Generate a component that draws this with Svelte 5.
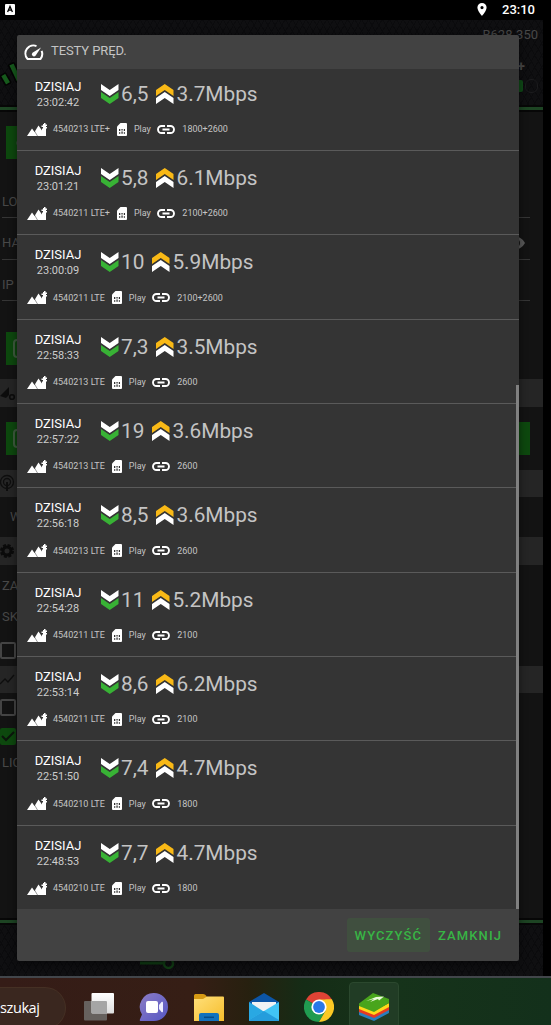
<script lang="ts">
	type Test = {
		time: string;
		down: string;
		up: string;
		cell: string;
		bands: string;
	};

	const tests: Test[] = [
		{ time: '23:02:42', down: '6,5', up: '3.7', cell: '4540213 LTE+', bands: '1800+2600' },
		{ time: '23:01:21', down: '5,8', up: '6.1', cell: '4540211 LTE+', bands: '2100+2600' },
		{ time: '23:00:09', down: '10', up: '5.9', cell: '4540211 LTE', bands: '2100+2600' },
		{ time: '22:58:33', down: '7,3', up: '3.5', cell: '4540213 LTE', bands: '2600' },
		{ time: '22:57:22', down: '19', up: '3.6', cell: '4540213 LTE', bands: '2600' },
		{ time: '22:56:18', down: '8,5', up: '3.6', cell: '4540213 LTE', bands: '2600' },
		{ time: '22:54:28', down: '11', up: '5.2', cell: '4540211 LTE', bands: '2100' },
		{ time: '22:53:14', down: '8,6', up: '6.2', cell: '4540211 LTE', bands: '2100' },
		{ time: '22:51:50', down: '7,4', up: '4.7', cell: '4540210 LTE', bands: '1800' },
		{ time: '22:48:53', down: '7,7', up: '4.7', cell: '4540210 LTE', bands: '1800' }
	];
</script>

<div class="screen">
	<header class="status">
		<svg class="keyboard" width="10" height="11" viewBox="0 0 10 11">
			<rect width="10" height="11" rx="1" fill="#fff" />
			<path d="M2.6 8 5 2.5 7.4 8M3.5 6.2h3" fill="none" stroke="#000" stroke-width="1.3" />
		</svg>
		<svg width="10" height="13" viewBox="0 0 10 13">
			<path fill="#fff" fill-rule="evenodd" d="M5 0a4.6 4.6 0 0 0-4.6 4.6C.4 8 5 13 5 13s4.6-5 4.6-8.4A4.6 4.6 0 0 0 5 0zm0 6.2a1.6 1.6 0 1 1 0-3.2 1.6 1.6 0 0 1 0 3.2z" />
		</svg>
		<span class="clock">23:10</span>
	</header>

	<main class="app">
		<div class="app-head">
			<svg class="logo" width="20" height="28" viewBox="0 0 20 28">
				<g fill="#165a1c" stroke="#040404" stroke-width="1.5">
					<rect x="2.5" y="13" width="6" height="11" rx="1" transform="rotate(-30 5 18)" />
					<rect x="12" y="2" width="6" height="19" rx="1" transform="rotate(-25 15 11)" />
				</g>
			</svg>
			<div class="device">
				<span>B628-350</span>
				<span class="plus">+</span>
				<div class="signal"><i class="on"></i><i></i></div>
			</div>
		</div>

		<div class="panel">
			<div class="login">
				<div class="green short"><svg width="16" height="16" viewBox="0 0 16 16"><circle cx="8" cy="8" r="4.5" fill="#4d554d" /></svg></div>
				<div class="field first">LO</div>
				<div class="field">
					HA
					<svg class="eye" width="22" height="16" viewBox="0 0 22 16">
						<path d="M0 8C5-1 16-1 21 8 16 17 5 17 0 8z" fill="#5a5a5a" />
						<circle cx="11" cy="8" r="5" fill="#131313" />
						<circle cx="11" cy="8" r="2.5" fill="#5a5a5a" />
					</svg>
				</div>
				<div class="field">IP</div>
				<div class="green short second"><b></b></div>
			</div>
			<div class="section">
				<svg width="16" height="18" viewBox="0 0 16 18">
					<path d="M0 12 9 3v8l-3 3z" fill="#0c0c0c" />
					<circle cx="12" cy="13" r="2.3" fill="none" stroke="#0c0c0c" stroke-width="1.6" />
				</svg>
			</div>
			<div class="block wide"><div class="green"><b></b></div></div>
			<div class="section">
				<svg width="16" height="18" viewBox="0 0 16 18" fill="none" stroke="#0e0e0e" stroke-width="1.3">
					<circle cx="7" cy="8" r="6.5" /><circle cx="7" cy="8" r="3.5" /><path d="M7 8v9" stroke-width="2" />
				</svg>
			</div>
			<div class="block mode">W</div>
			<div class="section">
				<svg width="16" height="16" viewBox="0 0 16 16">
					<circle cx="7" cy="8" r="4" fill="none" stroke="#0b0b0b" stroke-width="3" />
					<circle cx="7" cy="8" r="6" fill="none" stroke="#0b0b0b" stroke-width="2" stroke-dasharray="3 1.7" />
				</svg>
			</div>
			<div class="block options">
				<span>ZA</span>
				<span>SK</span>
				<i class="check"></i>
			</div>
			<div class="section">
				<svg width="16" height="16" viewBox="0 0 16 16"><path d="m0 13 5-5 3 3 6-7" fill="none" stroke="#0e0e0e" stroke-width="1.3" /></svg>
			</div>
			<div class="block checks">
				<i class="check"></i>
				<i class="check checked">
					<svg width="16" height="16" viewBox="0 0 16 16"><path d="m2 8 4 4 8-8" fill="none" stroke="#0c160c" stroke-width="2" /></svg>
				</i>
				<span>LIC</span>
			</div>
		</div>
		<div class="app-foot">
			<svg width="36" height="14" viewBox="0 0 36 14" fill="none" stroke="#103c14">
				<path d="M0 3h25" stroke-width="3" /><circle cx="28.500" cy="3.500" r="4.500" stroke-width="2.500" />
			</svg>
		</div>
	</main>

	<footer class="taskbar">
		<div class="search">szukaj</div>
		<div class="apps">
			<svg width="30" height="28" viewBox="0 0 30 28">
				<defs>
					<linearGradient id="pane" x1="0" y1="0" x2="0" y2="1"><stop stop-color="#fff" /><stop offset="1" stop-color="#ddd" /></linearGradient>
				</defs>
				<rect y="8" width="23" height="19.5" rx="1" fill="#66615e" />
				<rect x="7.5" width="22.5" height="20.5" rx="1" fill="url(#pane)" />
				<path d="M7.5 8H22a1 1 0 0 1 1 1v11.500H8.500a1 1 0 0 1-1-1z" fill="#a5a5a5" />
			</svg>
			<svg width="30" height="28" viewBox="0 0 30 28">
				<defs>
					<linearGradient id="chat" x1="0" y1="0" x2="1" y2="1"><stop stop-color="#8c7cc4" /><stop offset="1" stop-color="#5557c4" /></linearGradient>
				</defs>
				<path d="M15 0a14 14 0 1 1 0 28H1.500c-1 0-1-1 0-3L3 21.500A14 14 0 0 1 15 0z" fill="url(#chat)" />
				<rect x="7" y="8" width="12" height="12" rx="2" fill="#fff" />
				<path d="m20 12 2.500-3c1-.8 1.500 0 1.500 1v8c0 1-.5 1.800-1.500 1L20 16z" fill="#eef" />
			</svg>
			<svg width="30" height="28" viewBox="0 0 30 28">
				<defs>
					<linearGradient id="folder" x1="0" y1="0" x2="1" y2="1"><stop stop-color="#ffe07a" /><stop offset="1" stop-color="#f6bd2c" /></linearGradient>
				</defs>
				<path d="M0 7V2.500C0 1.500 1 1 2 1h7c1.500 0 3 1 4 3v3z" fill="#d69a14" />
				<path d="M0 6h9l4-2.500h16a1 1 0 0 1 1 1V28H0z" fill="url(#folder)" />
				<path d="M5 28v-6a2 2 0 0 1 2-2h16a2 2 0 0 1 2 2v6z" fill="#1372bd" />
				<path d="M10 24.300h10" stroke="#084c86" stroke-width="1.500" />
			</svg>
			<svg width="30" height="28" viewBox="0 0 30 28">
				<path d="M0 9 15 0l15 9v5H0z" fill="#0c55a6" />
				<path d="M3 9h24v10H3z" fill="#f1f3f4" />
				<path d="m0 9 17 11-12 8H0z" fill="#29a8e3" />
				<path d="M30 9 0 27v1h30z" fill="#41c5f5" />
				<path d="m15 18 15 9v1H0v-1z" fill="#259ddc" />
			</svg>
			<svg class="chrome" width="30" height="30" viewBox="0 0 30 30">
				<path d="M2 7.500A15 15 0 0 1 28 7.500L15 15z" fill="#df4335" />
				<path d="M2 7.500A15 15 0 0 0 15 30l6.500-11.300L15 15z" fill="#209b50" />
				<path d="M28 7.500A15 15 0 0 1 15 30l6.500-11.300V7.500z" fill="#fbc924" />
				<path d="M15 7.500h13L21.500 18.700z" fill="#fbc924" />
				<circle cx="15" cy="15" r="7.600" fill="#fff" /><circle cx="15" cy="15" r="5.900" fill="#2878e8" />
			</svg>
			<div class="active-app">
				<svg width="30" height="28" viewBox="0 0 30 28">
					<path d="m0 18 15 6 15-8v4l-15 8-15-6z" fill="#297fbd" />
					<path d="m0 15 15 6 15-8v4l-15 8-15-6z" fill="#e63a22" />
					<path d="m0 12 15 6 15-8v4l-15 8-15-6z" fill="#ffd91a" />
					<path d="M0 10.500 14 0l16 6v4l-15 9-15-6z" fill="#49a51c" />
					<path d="M7 8 17 4l8-.5-5 4-1-1.500-8 3 4-3z" fill="#eafada" />
				</svg>
			</div>
		</div>
	</footer>

	<div class="dialog">
		<div class="dialog-header">
			<svg width="20" height="17" viewBox="0 0 20 17">
				<path d="M12.500 2.100A8 8 0 0 0 3.200 14.500q.5.600 1.300.600h11q.8 0 1.300-.6a8 8 0 0 0 .8-7.700" fill="none" stroke="#fff" stroke-width="2" />
				<path d="m17 3.500-5.500 8.200a2.100 2.100 0 0 1-3-3z" fill="#fff" />
			</svg>
			<span>TESTY PRĘD.</span>
		</div>

		<div class="list">
			{#each tests as test (test.time)}
				<div class="test">
					<div class="result">
						<div class="when">
							<div class="day">DZISIAJ</div>
							<div class="time">{test.time}</div>
						</div>
						<svg class="arrows" width="17.500" height="20" viewBox="0 0 18 20" preserveAspectRatio="none">
							<path d="M0 0 9 6 18 0v6L9 12 0 6z" fill="#fff" />
							<path d="m0 8 9 6 9-6v6l-9 6-9-6z" fill="#38b235" />
						</svg>
						<span class="speed">{test.down}</span>
						<svg class="arrows up" width="17.500" height="20" viewBox="0 0 18 20" preserveAspectRatio="none">
							<path d="m0 6 9-6 9 6v6L9 6l-9 6z" fill="#f9b916" />
							<path d="m0 14 9-6 9 6v6l-9-6-9 6z" fill="#fff" />
						</svg>
						<span class="speed">{test.up}Mbps</span>
					</div>
					<div class="details">
						<svg width="20" height="13" viewBox="0 0 20 13">
							<path d="m0 13 5-7.500L7.500 9 11.500 2.500l3.500 5V5.500h1V4h-1.500V2.500H16V1h1V0h1.500v1.500H20V3h-1v1h1v1.500h-1V13z" fill="#fff" />
							<path d="m7.500 8 3 5" stroke="#343434" stroke-width=".5" />
						</svg>
						<span class="cell">{test.cell}</span>
						<svg class="sim" width="10" height="13" viewBox="0 0 10 13">
							<path d="M3.500 0H9a1 1 0 0 1 1 1v11a1 1 0 0 1-1 1H1a1 1 0 0 1-1-1V3.500z" fill="#fff" />
							<path d="M2 6h1.300v2H2zm2.400 0h1.300v1.500H4.400zM6.800 6H8v2H6.800zM2 9.200h1.300v1.500H2zm2.400-.7h1.300v2.200H4.400zm2.400.7H8v1.500H6.800z" fill="#333" />
						</svg>
						<span class="operator">Play</span>
						<svg class="link" width="18" height="9" viewBox="0 0 18 9">
							<path d="M8 1H4.500a3.500 3.500 0 0 0 0 7H8M10 1h3.500a3.500 3.500 0 0 1 0 7H10M5.500 4.500h7" fill="none" stroke="#fff" stroke-width="1.900" />
						</svg>
						<span>{test.bands}</span>
					</div>
				</div>
			{/each}
			<div class="scrollbar"></div>
		</div>

		<div class="actions">
			<button class="focused">WYCZYŚĆ</button>
			<button>ZAMKNIJ</button>
		</div>
	</div>
</div>

<style>
	:global(body) {
		background: #000;
	}

	.screen {
		position: relative;
		display: flex;
		flex-direction: column;
		width: 551px;
		height: 1025px;
		overflow: hidden;
		font-family: Roboto, 'Liberation Sans', sans-serif;
	}

	.screen * {
		box-sizing: border-box;
	}

	svg {
		display: block;
		flex-shrink: 0;
	}

	.status {
		display: flex;
		align-items: center;
		height: 20px;
		padding: 0 15px 2px 5px;
		background: #000;
		color: #fff;
	}

	.keyboard {
		margin-right: auto;
	}

	.clock {
		width: 34px;
		margin-left: 15px;
		font-size: 13px;
		font-weight: 500;
		white-space: nowrap;
	}

	.app {
		display: flex;
		flex-direction: column;
		width: 543px;
		height: 956px;
		color: #484848;
		font-size: 13px;
		background-color: #0f0f11;
		background-image: repeating-linear-gradient(60deg, transparent 0 5px, #0b0b0d 5px 6px),
			repeating-linear-gradient(-60deg, transparent 0 5px, #0b0b0d 5px 6px);
	}

	.app-head {
		display: flex;
		justify-content: space-between;
		height: 92px;
		border-bottom: 2px solid #070707;
		box-shadow: inset 0 -3px #1d4423, inset 0 -5px #070707;
	}

	.logo {
		margin-top: 41px;
	}

	.device {
		display: flex;
		flex-direction: column;
		align-items: flex-end;
		padding: 7px 5px 0 0;
		line-height: 16px;
	}

	.plus {
		margin: 15px 13px 0 0;
		font-size: 14px;
		font-weight: 700;
	}

	.signal {
		display: flex;
		gap: 2px;
		margin-top: 5px;
	}

	.signal i {
		width: 13px;
		height: 14px;
		border: 1px solid #1b1b1d;
		border-radius: 6px;
	}

	.signal .on {
		height: 12px;
		margin-top: 1px;
		border: 0;
		border-radius: 2px;
		background: #0f4a17;
	}

	.panel {
		display: flex;
		flex-direction: column;
		height: 806px;
		background: #131313;
	}

	.login {
		height: 267px;
		padding: 14px 13px 0 6px;
	}

	.green {
		display: flex;
		align-items: center;
		height: 33px;
		padding-left: 7px;
		background: #0d480e;
	}

	.green.short {
		width: 200px;
	}

	.green b {
		width: 18px;
		height: 19px;
		border: 2px solid #3f5b3f;
		border-radius: 4px;
	}

	.field {
		position: relative;
		height: 41.5px;
		margin-left: -4px;
		padding-top: 17px;
		border-bottom: 1px solid #353535;
		line-height: 16px;
	}

	.field.first {
		height: 59px;
		padding-top: 35px;
	}

	.eye {
		position: absolute;
		right: 4px;
		top: 17px;
	}

	.green.second {
		margin-top: 31px;
	}

	.section {
		display: flex;
		align-items: center;
		height: 27.5px;
		background: #252525;
	}

	.block {
		line-height: 16px;
	}

	.wide {
		height: 63px;
		padding: 15px 13px 0 6px;
	}

	.mode {
		height: 40px;
		padding: 12px 10px;
	}

	.options {
		display: flex;
		flex-direction: column;
		height: 101px;
		padding-top: 13px;
	}

	.options span {
		height: 31px;
		padding-left: 2px;
	}

	.check {
		width: 16px;
		height: 17px;
		border: 2px solid #444;
		border-radius: 2px;
		flex-shrink: 0;
	}

	.options .check {
		margin-top: 2px;
	}

	.checks {
		display: flex;
		flex-direction: column;
		padding-top: 6px;
	}

	.checks .checked {
		margin: 12px 0 10px;
		border: 0;
		background: #0d480e;
	}

	.checks span {
		padding-left: 2px;
	}

	.app-foot {
		height: 58px;
		padding: 42px 0 0 140px;
		box-shadow: inset 0 2px #070707, inset 0 5px #1d4423, inset 0 7px #070707;
	}

	.taskbar {
		display: flex;
		height: 49px;
		border-top: 2px solid #42464b;
		background: linear-gradient(90deg, #351c17 0, #361e15 35%, #27200f 45%, #152c16 55%, #16331a 72%, #13301b 100%);
	}

	.search {
		width: 66px;
		height: 42px;
		margin-top: 9px;
		border-radius: 0 21px 21px 0;
		border: 1px solid #453024;
		border-left: 0;
		background: #3a271f;
		color: #fff;
		font: 14.5px/39px 'Open Sans', 'Noto Sans', sans-serif;
		letter-spacing: -0.4px;
	}

	.apps {
		display: flex;
		align-items: flex-start;
		gap: 25px;
		padding: 15px 0 0 18px;
	}

	.chrome {
		margin-top: -1px;
	}

	.active-app {
		width: 50px;
		height: 46px;
		margin: -11px 0 0 -10px;
		padding: 10px 9px;
		border: 1px solid #2b482e;
		border-radius: 4px;
		background: #213c25;
	}

	/* dialog lies over the dimmed app */
	.dialog {
		position: absolute;
		top: 35px;
		left: 17px;
		display: flex;
		flex-direction: column;
		width: 502px;
		height: 926px;
		border-radius: 2px;
		overflow: hidden;
		background: #424242;
		box-shadow: 0 2px 8px rgba(0, 0, 0, 0.5);
	}

	.dialog-header {
		display: flex;
		align-items: center;
		gap: 7px;
		height: 34px;
		padding-left: 7px;
		color: #c4c4c4;
		font-size: 13px;
		line-height: 16px;
		flex-shrink: 0;
	}

	.dialog-header span {
		margin-top: -2px;
		letter-spacing: -0.1px;
	}

	.list {
		position: relative;
		display: flex;
		flex-direction: column;
		justify-content: flex-end;
		height: 840px;
		overflow: hidden;
		background: #343434;
	}

	.test {
		height: 84.35px;
		padding-top: 12px;
		border-bottom: 1px solid #5a5a5a;
		flex-shrink: 0;
	}

	.test:nth-last-child(2) {
		height: 83.35px;
		border-bottom: 0;
	}

	.result {
		display: flex;
		align-items: flex-start;
		height: 32px;
	}

	.when {
		width: 84px;
		padding-right: 2px;
		text-align: center;
		color: #fff;
	}

	.day {
		font-size: 13px;
		line-height: 15px;
	}

	.time {
		color: #ccc;
		font-size: 11px;
		line-height: 17px;
	}

	.arrows {
		margin-top: 5px;
	}

	.arrows.up {
		margin-left: 8px;
	}

	.speed {
		margin-left: 2.5px;
		color: #c4c4c4;
		font-size: 20.8px;
		line-height: 31px;
	}

	.details {
		display: flex;
		align-items: center;
		height: 15px;
		margin-top: 11px;
		padding-left: 10px;
		color: #c4c4c4;
		font-size: 9px;
	}

	.cell {
		margin-left: 6px;
	}

	.sim {
		margin: 0 7px;
	}

	.link {
		margin: 0 7.5px 0 6px;
	}

	.scrollbar {
		position: absolute;
		right: 0;
		bottom: 0;
		width: 3px;
		height: 524px;
		background: #808080;
	}

	.actions {
		display: flex;
		justify-content: flex-end;
		align-items: center;
		height: 52px;
		padding-right: 9px;
	}

	button {
		height: 34px;
		padding: 0 8px;
		border: 0;
		border-radius: 3px;
		background: none;
		color: #38b545;
		font: 500 13px Roboto, 'Liberation Sans', sans-serif;
		letter-spacing: 1.1px;
	}

	.focused {
		background: #404f3f;
	}
</style>
